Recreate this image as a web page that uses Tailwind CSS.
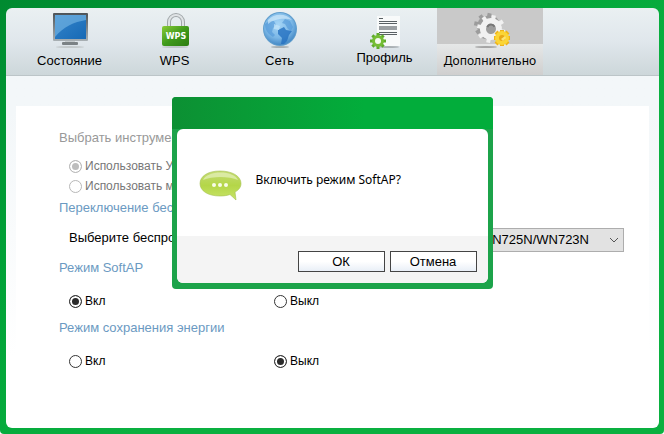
<!DOCTYPE html>
<html lang="ru">
<head>
    <meta charset="UTF-8">
    <meta name="viewport" content="width=device-width, initial-scale=1.0">
    <script src="https://cdn.jsdelivr.net/npm/@tailwindcss/browser@4"></script>
    <title>Дополнительно</title>
</head>
<body class="font-['Liberation_Sans',Arial,sans-serif] text-black">
    <div class="relative flex min-h-screen flex-col rounded-b-sm bg-linear-to-br from-[#008a30] from-0% via-[#00a137] via-30% to-[#0ab040] to-60% pt-2 pr-[5px] pb-1.5 pl-1.5">

        <!-- barra de pestañas -->
        <nav class="flex h-[68px] rounded-t-md border-b border-[#bcc5c8] bg-linear-to-b from-[#eaf0f2] via-[#e0e7ec] to-[#cdd7da] pl-[11px] text-[13px]">
            <a href="#" class="flex w-[105px] flex-col items-center gap-[3px] pt-1">
                <svg class="h-9 w-10" viewBox="0 0 40 36">
                    <defs>
                        <linearGradient id="pantalla" x1="0" y1="0" x2="1" y2="1">
                            <stop offset="0" stop-color="#3585cb"/><stop offset="1" stop-color="#1769b5"/>
                        </linearGradient>
                        <linearGradient id="marco" x1="0" y1="0" x2="0" y2="1">
                            <stop offset="0" stop-color="#4c5358"/><stop offset="1" stop-color="#a9b0b4"/>
                        </linearGradient>
                    </defs>
                    <rect x="3" y="1" width="35" height="28" rx="1" fill="url(#marco)"/>
                    <rect x="5" y="3" width="31" height="24" fill="url(#pantalla)"/>
                    <path d="M5 3h31v5C24 10 13 15 5 25z" fill="#75b5e3" opacity=".65"/>
                    <path d="M15 29h10v2H15z" fill="#c4cacc"/>
                    <rect x="12" y="30" width="16" height="3" rx="1" fill="#7b8285"/>
                    <ellipse cx="20" cy="35" rx="14" ry="1" fill="#c3c9cb"/>
                </svg>
                <span class="leading-5">Состояние</span>
            </a>
            <a href="#" class="flex w-[105px] flex-col items-center gap-[3px] pt-1">
                <svg class="h-9 w-10" viewBox="0 0 40 36">
                    <defs>
                        <linearGradient id="candado" x1="0" y1="0" x2="1" y2="1">
                            <stop offset="0" stop-color="#8acb36"/><stop offset=".5" stop-color="#3f9a1b"/><stop offset="1" stop-color="#2c7d12"/>
                        </linearGradient>
                    </defs>
                    <ellipse cx="20" cy="35" rx="13" ry="1" fill="#bfc6c8"/>
                    <path d="M14 16v-6a7 7 0 0 1 14 0v6" fill="none" stroke="#a0a6a9" stroke-width="4"/>
                    <path d="M14 16v-6a7 7 0 0 1 14 0v6" fill="none" stroke="#dfe3e5" stroke-width="2"/>
                    <rect x="7" y="14" width="27" height="20" rx="2" fill="url(#candado)"/>
                    <text x="21" y="27" text-anchor="middle" font-family="DejaVu Sans" font-weight="bold" font-size="8" fill="#fff">WPS</text>
                </svg>
                <span class="leading-5">WPS</span>
            </a>
            <a href="#" class="flex w-[105px] flex-col items-center gap-[3px] pt-1">
                <svg class="h-9 w-10" viewBox="0 0 40 36">
                    <defs>
                        <radialGradient id="globo" cx=".45" cy=".35" r=".65">
                            <stop offset="0" stop-color="#a5d5f6"/><stop offset=".65" stop-color="#7bb7e6"/><stop offset="1" stop-color="#4589c6"/>
                        </radialGradient>
                    </defs>
                    <ellipse cx="20" cy="35" rx="9" ry="1" fill="#a7afb3"/>
                    <circle cx="20" cy="17" r="17" fill="#5f9dcc"/>
                    <circle cx="20" cy="17" r="16" fill="url(#globo)"/>
                    <path d="M5 12c3-3 6-4 9-3l2 4-3 3-1 4 3 3-2 2c-5-3-8-7-8-13zM25 7l5 2 3 6-2 4-3-2-3-5-3-1z" fill="#4a92d5" opacity=".55"/>
                    <path d="M18 18l6-3 2 3 6 1-3 4-2 6-3 3h-3l1-6-4-4z" fill="#2470c0" opacity=".8"/>
                    <path d="M8 8C14 1 26 1 32 8c-6-2-17-2-24 4z" fill="#d8effc" opacity=".6"/>
                    <path d="M14 12l6 2-1 4-5-1z" fill="#c5e5fa" opacity=".7"/>
                </svg>
                <span class="leading-5">Сеть</span>
            </a>
            <a href="#" class="flex w-[105px] flex-col items-center gap-[3px] pt-1">
                <svg class="h-[33px] w-10 overflow-visible" viewBox="0 0 40 33">
                    <ellipse cx="24" cy="35" rx="10" ry="1" fill="#aab1b4"/>
                    <path d="M12 4h23v30H12z" fill="#f8fafa"/>
                    <path d="M14 6.500h4M14 9.500h18M14 11.500h18M14 20.500h18M14 22.500h18" stroke="#596064" stroke-width="1"/>
                    <path d="M14 14h18v4H14z" fill="#9a9fa2"/>
                    <g transform="translate(13 29)">
                        <path d="M0-8V8M-8 0H8M-5.600-5.600L5.600 5.600M-5.600 5.600L5.600-5.600" stroke="#5eab2a" stroke-width="3"/>
                        <circle r="6" fill="#75bd35"/>
                        <circle r="3" fill="#f4faef"/>
                    </g>
                </svg>
                <span class="leading-5">Профиль</span>
            </a>
            <a href="#" aria-current="page" class="flex w-[106px] flex-col items-center gap-[3px] bg-linear-to-b from-[#c9c9c9] from-53% via-[#e6e8e8] via-53% to-[#cfcfcf] pt-1">
                <svg class="h-9 w-10" viewBox="0 0 40 36">
                    <ellipse cx="16" cy="35" rx="11" ry="1" fill="#a5a5a5"/>
                    <g transform="translate(17 14) rotate(12)" stroke="#9c9c9c" stroke-width="4">
                        <path d="M0-13V13M-13 0H13M-9-9L9 9M-9 9L9-9"/>
                        <circle r="7" fill="none" stroke-width="6"/>
                    </g>
                    <g transform="translate(21 17) rotate(12)" stroke="#f1f1f1" stroke-width="4">
                        <path d="M0-14V14M-14 0H14M-10-10L10 10M-10 10L10-10"/>
                        <circle r="8" fill="#9d9d9d" stroke-width="6"/>
                        <path d="M-4-1a4 4 0 0 1 7-2" fill="none" stroke="#767676" stroke-width="2"/>
                    </g>
                    <g transform="translate(32 26)">
                        <path d="M0-8V8M-8 0H8M-6-6L6 6M-6 6L6-6" stroke="#efb419" stroke-width="4"/>
                        <circle r="7" fill="#fbd536"/>
                        <circle r="3" fill="#e9a915"/>
                        <path d="M-1 1L3-2l1 2-3 3z" fill="#fbe476"/>
                    </g>
                </svg>
                <span class="font-['Noto_Sans',sans-serif] text-xs leading-5">Дополнительно</span>
            </a>
        </nav>

        <!-- opciones -->
        <main class="flex grow rounded-b-md bg-linear-to-b from-[#f3f7f9] from-10% to-white to-80% px-2.5 pt-[30px]">
            <form class="grow bg-white pt-[22px] pl-[43px] text-[13px] leading-5">
                <fieldset disabled class="text-xs text-[#777777]">
                    <legend class="mb-2 text-[13px] leading-5 text-[#999999]">Выбрать инструмент</legend>
                    <label class="flex items-center gap-[3px] pl-2.5 leading-5">
                        <input type="radio" name="tool" checked class="size-[13px] appearance-none rounded-full border border-[#b8b8b8] checked:bg-[#bdbdbd] checked:shadow-[inset_0_0_0_2px_white]">
                        Использовать Утилиту
                    </label>
                    <label class="flex items-center gap-[3px] pl-2.5 leading-5">
                        <input type="radio" name="tool" class="size-[13px] appearance-none rounded-full border border-[#b8b8b8]">
                        Использовать мастер
                    </label>
                </fieldset>

                <h2 class="mt-0.5 text-[#6b9ac2]">Переключение беспроводного</h2>
                <div class="mt-2.5 flex items-center pl-2.5">
                    <label for="adapter" class="w-[206px] pb-1 whitespace-nowrap">Выберите беспроводной</label>
                    <div class="relative">
                        <select id="adapter" class="h-6 w-[349px] appearance-none border border-[#adadad] bg-[#e2e2e2] pr-[34px] text-right text-[13px] leading-5 [text-align-last:right]">
                            <option>WN725N/WN723N</option>
                        </select>
                        <svg class="pointer-events-none absolute top-2 right-1 h-2 w-3" viewBox="0 0 12 8" fill="none" stroke="#555"><path d="M2 2l4 4 4-4"/></svg>
                    </div>
                </div>

                <fieldset class="mt-1.5 text-xs">
                    <legend class="mb-[13px] text-[13px] leading-5 text-[#6b9ac2]">Режим SoftAP</legend>
                    <div class="flex pl-2.5 leading-5">
                        <label class="flex w-[205px] items-center gap-[3px]">
                            <input type="radio" name="softap" checked class="size-[13px] appearance-none rounded-full border border-[#333] checked:bg-[#2b2b2b] checked:shadow-[inset_0_0_0_2px_white]">
                            Вкл
                        </label>
                        <label class="flex items-center gap-[3px]">
                            <input type="radio" name="softap" class="size-[13px] appearance-none rounded-full border border-[#333]">
                            Выкл
                        </label>
                    </div>
                </fieldset>

                <fieldset class="mt-[7px] text-xs">
                    <legend class="mb-[13px] text-[13px] leading-5 text-[#6b9ac2]">Режим сохранения энергии</legend>
                    <div class="flex pl-2.5 leading-5">
                        <label class="flex w-[205px] items-center gap-[3px]">
                            <input type="radio" name="energy" class="size-[13px] appearance-none rounded-full border border-[#333]">
                            Вкл
                        </label>
                        <label class="flex items-center gap-[3px]">
                            <input type="radio" name="energy" checked class="size-[13px] appearance-none rounded-full border border-[#333] checked:bg-[#2b2b2b] checked:shadow-[inset_0_0_0_2px_white]">
                            Выкл
                        </label>
                    </div>
                </fieldset>
            </form>
        </main>

        <!-- ventana de confirmacion -->
        <div role="dialog" aria-labelledby="pregunta" class="absolute inset-x-0 top-[97px] mx-auto w-[321px] overflow-hidden rounded-sm bg-[#1ca34a]">
            <div class="h-8 bg-linear-to-r from-[#0c9033] to-[#02ad3b] to-60%"></div>
            <div class="px-[5px] pb-1.5">
                <div class="overflow-hidden rounded-md bg-white">
                    <div class="flex h-[107px] items-start gap-3.5 pt-[41px] pl-[22px]">
                        <svg class="h-8 w-[43px]" viewBox="0 0 43 32">
                            <defs>
                                <linearGradient id="burbuja" x1="0" y1="0" x2="0" y2="1">
                                    <stop offset="0" stop-color="#c4db73"/><stop offset=".5" stop-color="#b4d648"/><stop offset="1" stop-color="#c8e468"/>
                                </linearGradient>
                            </defs>
                            <path d="M21 1C9 1 1 6 1 13.500S9 26 21 26c4 0 7-.5 10-1.500L37 30l-1-8c4-2 6-5 6-8.500C42 6 33 1 21 1z" fill="url(#burbuja)" stroke="#a5bf51" stroke-width=".6"/>
                            <path d="M4 10C8 0 35 0 39 10c-9-4-26-4-35 0z" fill="#e6f1bc" opacity=".7"/>
                            <g fill="#f8fce9"><circle cx="15" cy="15" r="2"/><circle cx="21" cy="15" r="2"/><circle cx="27" cy="15" r="2"/></g>
                        </svg>
                        <p id="pregunta" class="font-['Noto_Sans',sans-serif] text-xs leading-5">Включить режим SoftAP?</p>
                    </div>
                    <div class="flex justify-end gap-[5px] bg-[#f4f4f4] px-[11px] pt-[15px] pb-[11px] text-[13px]">
                        <button class="flex h-[21px] w-[87px] items-center justify-center border border-[#444] bg-linear-to-b from-white from-50% to-[#e9eff7]">ОК</button>
                        <button class="flex h-[21px] w-[87px] items-center justify-center border border-[#444] bg-linear-to-b from-white from-50% to-[#e9eff7]">Отмена</button>
                    </div>
                </div>
            </div>
        </div>
    </div>
</body>
</html>
